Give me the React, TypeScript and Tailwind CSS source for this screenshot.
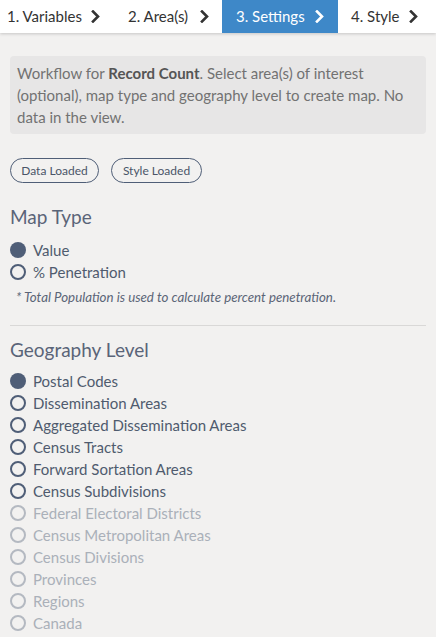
import React from "react";

const Chevron = ({ color }: { color: string }) => (
  <svg width="9" height="13" viewBox="0 0 9 13" fill="none">
    <polyline points="2,1.5 7,6.5 2,11.5" stroke={color} strokeWidth="2.6" strokeLinecap="square" strokeLinejoin="miter" />
  </svg>
);

const Radio = ({ label, checked, disabled }: { label: string; checked?: boolean; disabled?: boolean }) => (
  <div className="flex items-center h-[22px]">
    {checked ? (
      <span className="w-[16px] h-[16px] rounded-full bg-[#4f5e77] shrink-0" />
    ) : (
      <span
        className={
          disabled
            ? "w-[16px] h-[16px] rounded-full border-2 border-[#b4b9c1] shrink-0"
            : "w-[16px] h-[16px] rounded-full border-2 border-[#4f5e77] shrink-0"
        }
      />
    )}
    <span className={disabled ? "ml-[7px] text-[15px] text-[#aab0b9]" : "ml-[7px] text-[15px] text-[#4f5b6e]"}>{label}</span>
  </div>
);

export default function App() {
  const geo: [string, boolean, boolean][] = [
    ["Postal Codes", true, false],
    ["Dissemination Areas", false, false],
    ["Aggregated Dissemination Areas", false, false],
    ["Census Tracts", false, false],
    ["Forward Sortation Areas", false, false],
    ["Census Subdivisions", false, false],
    ["Federal Electoral Districts", false, true],
    ["Census Metropolitan Areas", false, true],
    ["Census Divisions", false, true],
    ["Provinces", false, true],
    ["Regions", false, true],
    ["Canada", false, true],
  ];
  return (
    <div className="w-[436px] h-[637px] overflow-hidden bg-[#f2f1f0] font-['Lato',sans-serif]">
      <div className="flex h-[33px] bg-white shadow-[0_1px_3px_rgba(0,0,0,0.18)] text-[15px] text-[#333333]">
        <div className="w-[114px] flex items-center justify-between pl-[7px] pr-[14px]">
          <span>1. Variables</span>
          <Chevron color="#333333" />
        </div>
        <div className="w-[108px] flex items-center justify-between pl-[14px] pr-[13px]">
          <span>2. Area(s)</span>
          <Chevron color="#333333" />
        </div>
        <div className="w-[116px] flex items-center justify-between pl-[14px] pr-[14px] bg-[#3e88c8] text-white">
          <span>3. Settings</span>
          <Chevron color="#ffffff" />
        </div>
        <div className="flex-1 flex items-center justify-between pl-[13px] pr-[18px]">
          <span>4. Style</span>
          <Chevron color="#333333" />
        </div>
      </div>

      <div className="px-[10px]">
        <div className="mt-[23px] rounded-[4px] bg-[#e7e6e6] px-[7px] py-[6px] text-[15px] leading-[22px] text-[#727272]">
          Workflow for <b className="font-bold text-[#555555]">Record Count</b>. Select area(s) of interest (optional), map type and geography level to create map. No data in the view.
        </div>

        <div className="mt-[24px] flex gap-[12px]">
          <span className="h-[25px] w-[89px] justify-center flex items-center rounded-full border border-[#4f5e77] text-[12px] text-[#4a5568]">Data Loaded</span>
          <span className="h-[25px] w-[91px] justify-center flex items-center rounded-full border border-[#4f5e77] text-[12px] text-[#4a5568]">Style Loaded</span>
        </div>

        <div className="mt-[21px] text-[19px] leading-[26px] text-[#5a6478]">Map Type</div>
        <div className="mt-[9px]">
          <Radio label="Value" checked />
          <Radio label="% Penetration" />
        </div>
        <div className="mt-[6px] pl-[6px] text-[13.3px] leading-[16px] italic text-[#5b6577]">
          * Total Population is used to calculate percent penetration.
        </div>
        <div className="mt-[20px] h-px bg-[#d9d8d7]" />

        <div className="mt-[11px] text-[19px] leading-[26px] text-[#5a6478]">Geography Level</div>
        <div className="mt-[7px]">
          {geo.map(([l, c, d]) => (
            <Radio key={l} label={l} checked={c} disabled={d} />
          ))}
        </div>
      </div>
    </div>
  );
}
